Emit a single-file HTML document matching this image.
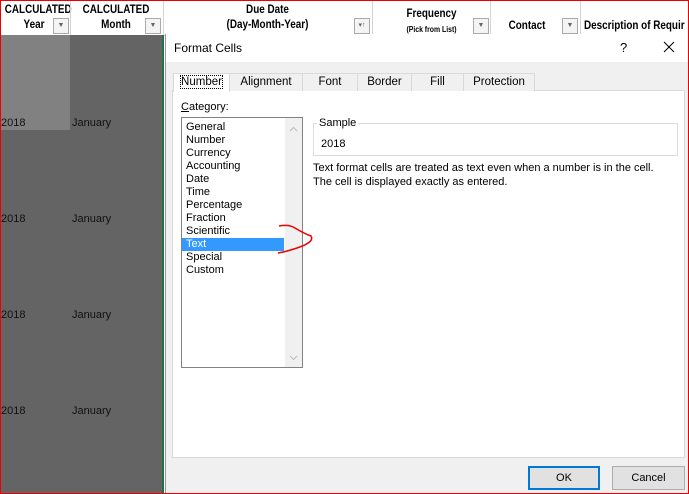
<!DOCTYPE html><html><head><style>
body{margin:0;width:689px;height:494px;overflow:hidden;position:relative;font-family:"Liberation Sans",sans-serif;background:#fff}
.a{position:absolute}
.h{font-weight:bold;font-size:11.5px;color:#000;text-align:center;font-family:"Liberation Sans Narrow","Liberation Sans",sans-serif;line-height:15px;transform:scaleX(0.86);transform-origin:center top}
.fb{position:absolute;width:14px;height:14px;border:1px solid #aaa;background:#f4f4f4;font-size:7px;text-align:center;line-height:14px;color:#666}
.s{font-size:11px;color:#111}
.t{position:absolute;top:73px;height:17px;border:1px solid #d9d9d9;border-bottom:none;font-size:11.5px;line-height:17px;text-align:center;background:#f0f0f0}
.li{font-size:11px;line-height:13px;padding-left:4px;color:#000}
</style></head><body>
<div class="a" style="left:0;top:0;width:689px;height:35px;background:#fff;border-bottom:1px solid #ccc"></div>
<div class="a h" style="left:0;top:3px;width:68px">CALCULATED<br><span style="position:relative;left:0">Year</span></div>
<div class="fb" style="left:53px;top:18px">▼</div>
<div class="a" style="left:70px;top:0;width:1px;height:35px;background:#d4d4d4"></div>
<div class="a h" style="left:72px;top:3px;width:88px">CALCULATED<br>Month</div>
<div class="fb" style="left:145px;top:18px">▼</div>
<div class="a" style="left:163px;top:0;width:1px;height:35px;background:#d4d4d4"></div>
<div class="a h" style="left:165px;top:3px;width:205px">Due Date<br>(Day-Month-Year)</div>
<div class="fb" style="left:354px;top:18px">▾↑</div>
<div class="a" style="left:372px;top:0;width:1px;height:35px;background:#d4d4d4"></div>
<div class="a h" style="left:374px;top:7px;width:115px">Frequency<br><span style="font-size:8px">(Pick from List)</span></div>
<div class="fb" style="left:473px;top:18px">▼</div>
<div class="a" style="left:490px;top:0;width:1px;height:35px;background:#d4d4d4"></div>
<div class="a h" style="left:492px;top:19px;width:70px">Contact</div>
<div class="fb" style="left:562px;top:18px">▼</div>
<div class="a" style="left:580px;top:0;width:1px;height:35px;background:#d4d4d4"></div>
<div class="a h" style="left:584px;top:19px;width:130px;text-align:left;white-space:nowrap;transform-origin:left top">Description of Requir</div>
<div class="a" style="left:0;top:35px;width:162px;height:459px;background:#646464"></div>
<div class="a" style="left:0;top:35px;width:70px;height:95px;background:#818181"></div>
<div class="a" style="left:162px;top:35px;width:2px;height:459px;background:#217346"></div>
<div class="a s" style="left:1px;top:117px">2018</div><div class="a s" style="left:72px;top:117px">January</div>
<div class="a s" style="left:1px;top:213px">2018</div><div class="a s" style="left:72px;top:213px">January</div>
<div class="a s" style="left:1px;top:309px">2018</div><div class="a s" style="left:72px;top:309px">January</div>
<div class="a s" style="left:1px;top:405px">2018</div><div class="a s" style="left:72px;top:405px">January</div>
<div class="a" style="left:165px;top:34px;width:524px;height:460px;background:#f0f0f0;border-left:1px solid #999"></div>
<div class="a" style="left:166px;top:34px;width:523px;height:28px;background:#fff"></div>
<div class="a" style="left:174px;top:41px;font-size:12px">Format Cells</div>
<div class="a" style="left:620px;top:40px;font-size:13px">?</div>
<svg class="a" style="left:663px;top:41px" width="12" height="12"><path d="M1 1L11 11M11 1L1 11" stroke="#000" stroke-width="1"/></svg>
<div class="a" style="left:172px;top:90px;width:511px;height:366px;background:#fff;border:1px solid #d9d9d9"></div>
<div class="t" style="left:173px;width:55px;background:#fff;height:18px"><span style="outline:1px dotted #000">Number</span></div>
<div class="t" style="left:229px;width:72px">Alignment</div>
<div class="t" style="left:302px;width:54px">Font</div>
<div class="t" style="left:357px;width:53px">Border</div>
<div class="t" style="left:411px;width:51px">Fill</div>
<div class="t" style="left:463px;width:70px">Protection</div>
<div class="a" style="left:181px;top:101px;font-size:11px"><u>C</u>ategory:</div>
<div class="a" style="left:181px;top:117px;width:120px;height:249px;border:1px solid #828282;background:#fff">
<div style="position:absolute;right:0;top:0;width:17px;height:249px;background:#f0f0f0"></div>
<svg style="position:absolute;right:4px;top:8px" width="9" height="6"><path d="M1 5L4.5 1.5L8 5" fill="none" stroke="#bbb"/></svg>
<svg style="position:absolute;right:4px;bottom:6px" width="9" height="6"><path d="M1 1L4.5 4.5L8 1" fill="none" stroke="#bbb"/></svg>
<div style="padding-top:3px;width:102px">
<div class="li">General</div><div class="li">Number</div><div class="li">Currency</div><div class="li">Accounting</div><div class="li">Date</div><div class="li">Time</div><div class="li">Percentage</div><div class="li">Fraction</div><div class="li">Scientific</div><div class="li" style="background:#3399ff;color:#fff">Text</div><div class="li">Special</div><div class="li">Custom</div></div></div>
<svg class="a" style="left:275px;top:222px" width="45" height="36"><path d="M4 4 Q14 2 20 6 Q30 12 36 14 Q40 20 22 26 Q10 30 3 31" fill="none" stroke="#e00" stroke-width="1.5"/></svg>
<div class="a" style="left:313px;top:123px;width:363px;height:31px;border:1px solid #dcdcdc"></div>
<div class="a" style="left:317px;top:117px;font-size:11px;background:#fff;padding:0 2px">Sample</div>
<div class="a" style="left:321px;top:138px;font-size:11px">2018</div>
<div class="a" style="left:313px;top:161px;font-size:11px;line-height:14px">Text format cells are treated as text even when a number is in the cell.<br>The cell is displayed exactly as entered.</div>
<div class="a" style="left:528px;top:466px;width:68px;height:20px;border:2px solid #0078d7;background:#e1e1e1;font-size:11px;text-align:center;line-height:20px">OK</div>
<div class="a" style="left:612px;top:466px;width:71px;height:22px;border:1px solid #adadad;background:#e1e1e1;font-size:11px;text-align:center;line-height:22px">Cancel</div>
<div class="a" style="left:0;top:0;width:687px;height:492px;border:1px solid #e00"></div>
</body></html>
